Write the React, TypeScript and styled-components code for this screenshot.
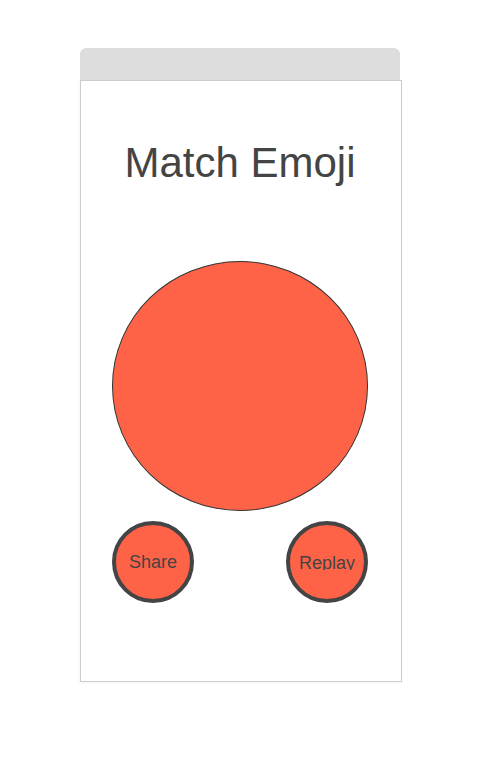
import React from "react";
import styled, { createGlobalStyle } from "styled-components";

const Global = createGlobalStyle`
  html, body { margin: 0; padding: 0; background: #ffffff; }
  body { font-family: "Liberation Sans", Arial, sans-serif; }
`;

const Page = styled.div`
  width: 480px;
  height: 760px;
  padding-top: 48px;
  box-sizing: border-box;
  display: flex;
  flex-direction: column;
  align-items: center;
`;

const Column = styled.div`
  width: 320px;
  display: flex;
  flex-direction: column;
`;

const TopBar = styled.div`
  height: 32px;
  background: #dddddd;
  border-radius: 6px 6px 0 0;
`;

const Card = styled.div`
  width: 318px;
  height: 600px;
  padding-right: 2px;
  border: 1px solid #cccccc;
  box-shadow: -1px 1px 3px rgba(0, 0, 0, 0.04);
  display: flex;
  flex-direction: column;
  align-items: center;
`;

const Title = styled.h1`
  margin: 58px 0 0 0;
  font-family: "Liberation Sans", Arial, sans-serif;
  font-weight: 400;
  font-size: 42px;
  line-height: normal;
  color: #444444;
`;

const Face = styled.div`
  margin-top: 74px;
  width: 254px;
  height: 248px;
  border-radius: 50%;
  background: #ff6347;
  border: 1px solid #333333;
`;

const ButtonRow = styled.div`
  margin-top: 10px;
  width: 256px;
  display: flex;
  justify-content: space-between;
`;

const RoundButton = styled.button`
  width: 82px;
  height: 82px;
  box-sizing: border-box;
  padding: 0;
  border-radius: 50%;
  border: 4px solid #444444;
  background: #ff6347;
  color: #444444;
  font-family: "Liberation Sans", Arial, sans-serif;
  font-size: 18px;
  display: flex;
  align-items: center;
  justify-content: center;
  cursor: pointer;
`;

const Label = styled.span<{ $clip?: boolean }>`
  display: block;
  line-height: ${(p) => (p.$clip ? "18px" : "normal")};
  height: ${(p) => (p.$clip ? "16.5px" : "auto")};
  overflow: hidden;
`;

export default function App() {
  return (
    <>
      <Global />
      <Page>
        <Column>
          <TopBar />
          <Card>
            <Title>Match Emoji</Title>
            <Face />
            <ButtonRow>
              <RoundButton>
                <Label>Share</Label>
              </RoundButton>
              <RoundButton>
                <Label $clip>Replay</Label>
              </RoundButton>
            </ButtonRow>
          </Card>
        </Column>
      </Page>
    </>
  );
}
